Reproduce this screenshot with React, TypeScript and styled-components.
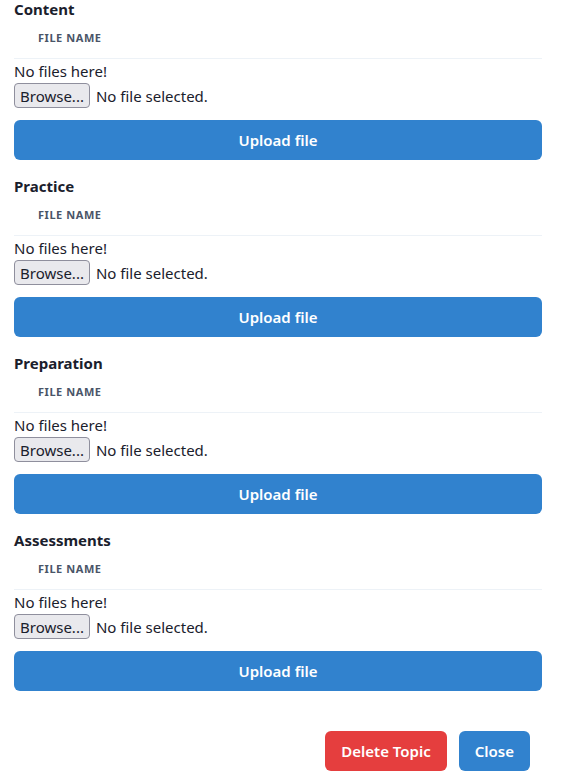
import styled, { createGlobalStyle } from "styled-components";

const GlobalStyle = createGlobalStyle`
  body {
    margin: 0;
    background: #ffffff;
    color: #1a202c;
    font-family: "Noto Sans", "Open Sans", sans-serif;
  }
`;

const Wrapper = styled.div`
  width: 566px;
  box-sizing: border-box;
  padding: 0 24px 0 14px;
`;

const Section = styled.section`
  display: flex;
  flex-direction: column;
  margin-bottom: 17px;
`;

const Heading = styled.h2`
  margin: 0;
  font-size: 15px;
  font-weight: 700;
  line-height: 18px;
`;

const Table = styled.table`
  width: 100%;
  border-collapse: collapse;
`;

const HeadCell = styled.th`
  text-align: left;
  padding: 12px 24px;
  font-size: 11px;
  line-height: 16px;
  font-weight: 700;
  letter-spacing: 0.05em;
  text-transform: uppercase;
  color: #4a5568;
  border-bottom: 1px solid #edf2f7;
`;

const Empty = styled.p`
  margin: 0;
  font-size: 15px;
  line-height: 24px;
`;

const FileRow = styled.label`
  display: flex;
  align-items: center;
  gap: 6px;
  height: 25px;
  font-size: 15px;
  cursor: pointer;

  input {
    display: none;
  }
`;

const BrowseButton = styled.span`
  display: inline-flex;
  align-items: center;
  box-sizing: border-box;
  height: 25px;
  padding: 0 5px;
  background: #e9e9ed;
  border: 1px solid #8f8f9d;
  border-radius: 4px;
  font-size: 15px;
`;

const Button = styled.button<{ $tone: "blue" | "red"; $wide?: boolean }>`
  height: 40px;
  padding: 0 16px;
  border: 0;
  border-radius: 6px;
  font-family: inherit;
  font-size: 15px;
  font-weight: 600;
  color: #ffffff;
  background: ${(p) => (p.$tone === "red" ? "#e53e3e" : "#3182ce")};
  width: ${(p) => (p.$wide ? "100%" : "auto")};
  margin-top: ${(p) => (p.$wide ? "12px" : "0")};
  cursor: pointer;
`;

const Footer = styled.footer`
  display: flex;
  justify-content: flex-end;
  gap: 12px;
  margin-top: 40px;
  padding-right: 12px;
  padding-bottom: 10px;
`;

const sections = ["Content", "Practice", "Preparation", "Assessments"];

function UploadSection({ title }: { title: string }) {
  return (
    <Section>
      <Heading>{title}</Heading>
      <Table>
        <thead>
          <tr>
            <HeadCell>File name</HeadCell>
          </tr>
        </thead>
      </Table>
      <Empty>No files here!</Empty>
      <FileRow>
        <input type="file" />
        <BrowseButton>Browse...</BrowseButton>
        No file selected.
      </FileRow>
      <Button $tone="blue" $wide>
        Upload file
      </Button>
    </Section>
  );
}

function App() {
  return (
    <Wrapper>
      <GlobalStyle />
      {sections.map((s) => (
        <UploadSection key={s} title={s} />
      ))}
      <Footer>
        <Button $tone="red">Delete Topic</Button>
        <Button $tone="blue">Close</Button>
      </Footer>
    </Wrapper>
  );
}

export default App;
